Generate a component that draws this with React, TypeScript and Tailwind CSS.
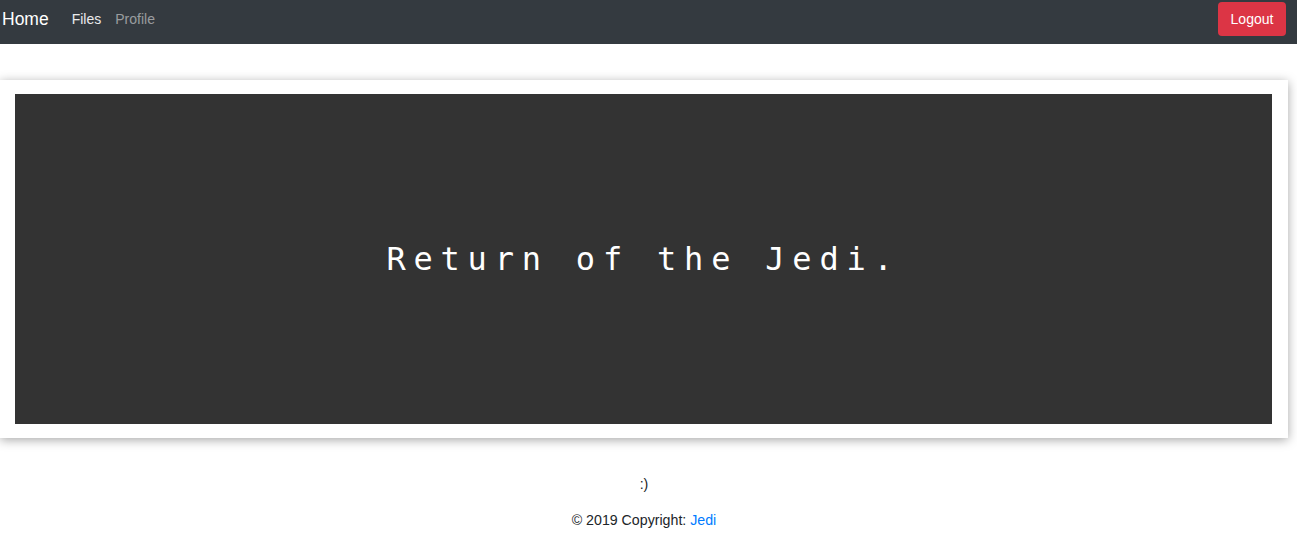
export default function App() {
  return (
    <div className="min-h-screen bg-white" style={{ fontFamily: '"Liberation Sans", Arial, sans-serif' }}>
      <nav className="h-[44px] bg-[#343a40] flex items-start pt-[2px] pl-[2px] pr-[11px]">
        <div className="h-[34px] flex items-center flex-1">
          <span className="text-[17.5px] text-white mr-[16px]">Home</span>
          <span className="text-[14px] text-white/90 px-[7px]">Files</span>
          <span className="text-[14px] text-white/50 px-[7px]">Profile</span>
        </div>
        <button className="h-[34px] w-[68px] rounded-[4px] bg-[#dc3545] text-white text-[14px]">Logout</button>
      </nav>
      <div className="pt-[36px] pr-[9px]">
        <div className="bg-white py-[14px] pl-[15px] pr-[16px] shadow-[0_2px_10px_rgba(0,0,0,0.35)]">
          <div className="h-[330px] bg-[#333333] flex items-center justify-center">
            <span
              className="text-white text-[32px] tracking-[7.8px] leading-none"
              style={{ fontFamily: '"DejaVu Sans Mono", monospace' }}
            >
              Return of the Jedi.
            </span>
          </div>
        </div>
        <footer className="text-center text-[14.2px] text-[#212529] pt-[38px]">
          <div className="h-[16px] leading-[16px]">:)</div>
          <div className="mt-[20px] h-[16px] leading-[16px]">
            © 2019 Copyright: <span className="text-[#007bff]">Jedi</span>
          </div>
        </footer>
      </div>
    </div>
  );
}
